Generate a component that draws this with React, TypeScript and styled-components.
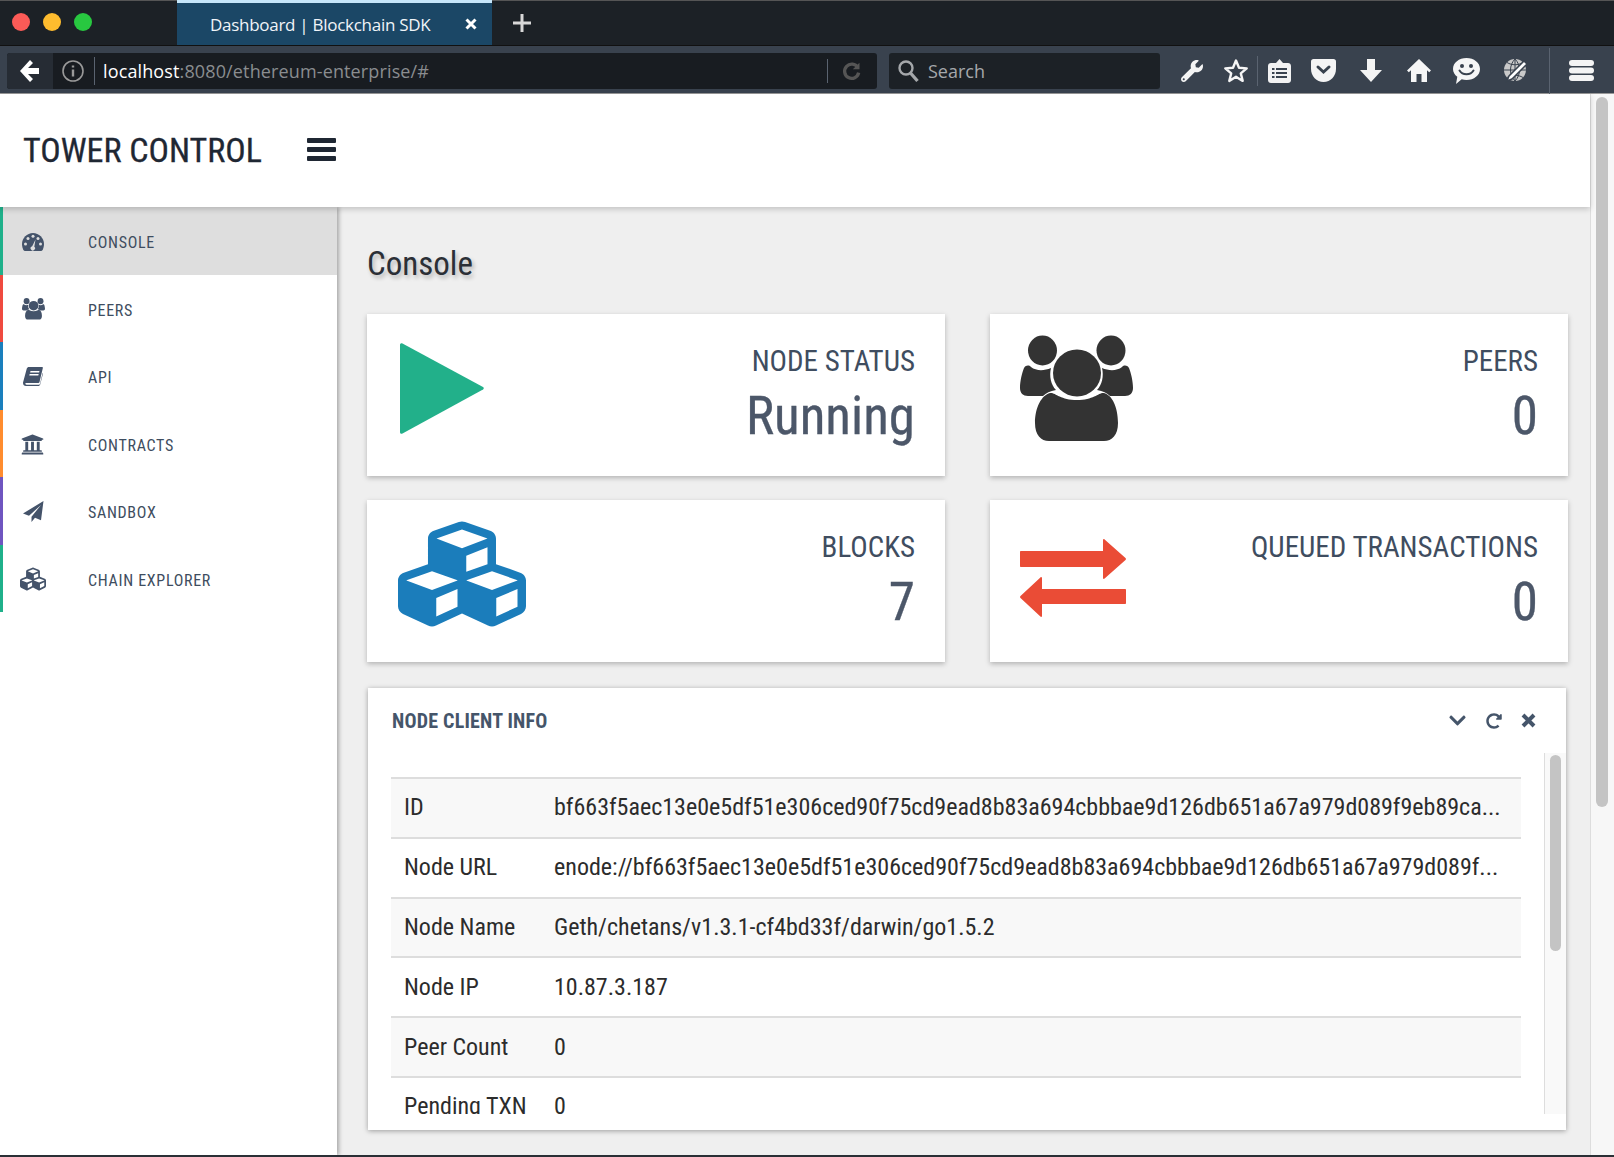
import React from "react";
import styled, { createGlobalStyle } from "styled-components";
import { FaChevronDown, FaCubes, FaRedoAlt, FaUniversity, FaWrench } from "react-icons/fa";

const GlobalStyle = createGlobalStyle`
  html, body {
    margin: 0;
    padding: 0;
    height: 1157px;
    overflow: hidden;
    background: #2a2f35;
  }
  * { box-sizing: border-box; }
`;

const CONDENSED = `"Roboto Condensed", Roboto, sans-serif`;

const Window = styled.div`
  width: 1614px;
  height: 1155px;
  display: flex;
  flex-direction: column;
  overflow: hidden;
  font-family: ${CONDENSED};
  font-stretch: condensed;
`;

const TabBar = styled.div`
  height: 46px;
  background: #1c2126;
  display: flex;
  align-items: stretch;
  border-bottom: 1px solid #111;
  border-top: 1px solid #555;
`;

const Lights = styled.div`
  width: 177px;
  padding: 12px 0 0 12px;
  display: flex;
  gap: 13px;
`;

const Light = styled.span<{ $c: string }>`
  width: 18px;
  height: 18px;
  border-radius: 50%;
  background: ${(p) => p.$c};
`;

const Tab = styled.div`
  width: 315px;
  background: #1b4766;
  border-top: 3px solid #c6e6fa;
  margin-top: -1px;
  display: flex;
  align-items: center;
  padding: 0 15px 0 33px;
  color: #f0f4f8;
  font: 17px "Open Sans", sans-serif;
  letter-spacing: -0.28px;
  justify-content: space-between;
`;

const NewTab = styled.span`
  display: flex;
  align-items: center;
  margin-left: 21px;
`;

const Toolbar = styled.div`
  height: 48px;
  background: #39424e;
  border-bottom: 1px solid #999;
  display: flex;
  align-items: center;
  padding: 2px 0 0 7px;
  color: #fff;
`;

const UrlBar = styled.div`
  width: 870px;
  height: 36px;
  background: #181c21;
  border-radius: 3px;
  display: flex;
  align-items: center;
  overflow: hidden;
`;

const BackButton = styled.div`
  width: 46px;
  height: 36px;
  background: #262c34;
  display: flex;
  align-items: center;
  justify-content: center;
`;

const Host = styled.span`
  color: #fff;
  font: 18px "Open Sans", sans-serif;
  letter-spacing: 0.13px;
`;

const UrlRest = styled.span`
  color: #8a8d90;
`;

const Sep = styled.span<{ $h: number; $m: string }>`
  width: 1px;
  height: ${(p) => p.$h}px;
  background: #5a6370;
  margin: ${(p) => p.$m};
  flex: none;
`;

const SearchBox = styled.div`
  width: 271px;
  height: 36px;
  margin-left: 12px;
  background: #1c2126;
  border-radius: 3px;
  display: flex;
  align-items: center;
  gap: 9px;
  padding-left: 8px;
  color: #a5a8ab;
  font: 18px "Open Sans", sans-serif;
`;

const ToolIcons = styled.div`
  flex: 1;
  display: flex;
  align-items: center;
  height: 100%;
  padding-left: 10px;
`;

const ToolSlot = styled.div<{ $w: number }>`
  width: ${(p) => p.$w}px;
  flex: none;
  display: flex;
  align-items: center;
  justify-content: center;
`;

const Page = styled.div`
  flex: 1;
  display: flex;
  min-height: 0;
  background: #efefef;
`;

const PageBody = styled.div`
  width: 1590px;
  display: flex;
  flex-direction: column;
`;

const Header = styled.header`
  height: 113px;
  background: #fff;
  display: flex;
  align-items: center;
  padding: 0 0 2px 23px;
  gap: 45px;
  position: relative;
  z-index: 2;
  box-shadow: 0 2px 6px rgba(0, 0, 0, 0.2);
`;

const Logo = styled.div`
  font-size: 34px;
  font-weight: 400;
  -webkit-text-stroke: 0.3px #1f2733;
  color: #1f2733;
  width: 239px;
  white-space: nowrap;
`;

const Burger = styled.div`
  width: 29px;
  height: 23px;
  display: flex;
  flex-direction: column;
  justify-content: space-between;
  & > i {
    display: block;
    height: 5px;
    border-radius: 1px;
    background: #1f2733;
  }
`;

const Columns = styled.div`
  flex: 1;
  display: flex;
  min-height: 0;
`;

const Sidebar = styled.nav`
  width: 337px;
  background: #fff;
  box-shadow: 2px 0 4px rgba(0, 0, 0, 0.3);
  position: relative;
  z-index: 1;
`;

const NavItem = styled.div<{ $bar: string; $active?: boolean }>`
  height: 67.5px;
  display: flex;
  align-items: center;
  border-left: 3px solid ${(p) => p.$bar};
  background: ${(p) => (p.$active ? "#dedede" : "#fff")};
  color: #3e4d60;
  font-size: 16px;
  letter-spacing: 0.7px;
`;

const NavIcon = styled.span<{ $x: number }>`
  width: 85px;
  height: 30px;
  padding: 2px 0 0 ${(p) => p.$x}px;
  display: flex;
  align-items: center;
  color: #44536a;
`;

const NavLabel = styled.span`
  padding-top: 4px;
`;

const Main = styled.main`
  flex: 1;
  padding: 37px 24px 0 30px;
  display: flex;
  flex-direction: column;
  min-width: 0;
`;

const Title = styled.h1`
  margin: 0 0 30px;
  font-size: 33px;
  line-height: 40px;
  font-weight: 400;
  color: #2b2f36;
  text-shadow: 2px 3px 4px rgba(0, 0, 0, 0.25);
`;

const Cards = styled.div`
  display: grid;
  grid-template-columns: 578px 578px;
  column-gap: 45px;
  row-gap: 24px;
`;

const Card = styled.div`
  height: 162px;
  background: #fff;
  box-shadow: 0 2px 5px rgba(0, 0, 0, 0.25);
  display: flex;
  justify-content: space-between;
  padding-right: 30px;
`;

const CardIcon = styled.div<{ $left: number; $top: number }>`
  padding: ${(p) => p.$top}px 0 0 ${(p) => p.$left}px;
`;

const BlocksIcon = styled(FaCubes)`
  display: block;
  width: 128px;
  height: 120px;
  color: #1b7dbb;
`;

const CardText = styled.div`
  text-align: right;
  display: flex;
  flex-direction: column;
  align-items: flex-end;
  padding-top: 29px;
`;

const CardLabel = styled.div`
  font-size: 29px;
  line-height: 36px;
  color: #3f4d60;
`;

const CardValue = styled.div`
  font-size: 53px;
  line-height: 64px;
  margin-top: 5px;
  color: #4c5769;
  -webkit-text-stroke: 0.3px #4c5769;
`;

const Panel = styled.section`
  margin: 26px 0 0 1px;
  height: 442px;
  background: #fff;
  box-shadow: 0 1px 5px rgba(0, 0, 0, 0.35);
  display: flex;
  flex-direction: column;
`;

const PanelHead = styled.div`
  height: 65px;
  display: flex;
  align-items: center;
  justify-content: space-between;
  padding: 0 30px 0 24px;
`;

const PanelTitle = styled.div`
  font-size: 20px;
  font-weight: 700;
  letter-spacing: 0.2px;
  color: #45556a;
`;

const PanelTools = styled.div`
  display: flex;
  align-items: center;
  gap: 19px;
  color: #45556a;
`;

const ScrollArea = styled.div`
  height: 361px;
  display: flex;
  background: #fff;
`;

const TableWrap = styled.div`
  flex: 1;
  overflow: hidden;
  padding: 24px 23px 0 23px;
  border-right: 1px solid #ddd;
`;

const Row = styled.div<{ $odd: boolean }>`
  height: 59.8px;
  display: flex;
  align-items: center;
  border-top: 2px solid #ddd;
  background: ${(p) => (p.$odd ? "#f8f8f8" : "#fff")};
  color: #2c2c2c;
  font-size: 24px;
  padding: 0 0 1px 13px;
  white-space: nowrap;
`;

const RowKey = styled.span`
  width: 150px;
  flex: none;
`;

const PanelTrack = styled.div`
  width: 21px;
  flex: none;
  background: #f9f9f9;
  padding: 2px 5px;
`;

const Thumb = styled.div<{ $h: number }>`
  height: ${(p) => p.$h}px;
  background: #c4c4c4;
  border-radius: 6px;
`;

const PageTrack = styled.div`
  width: 24px;
  background: #f7f7f7;
  border-left: 1px solid #ddd;
  padding: 3px 6px 0 5px;
`;

const Users = ({ width, color }: { width: number; color: string }) => (
  <svg width={width} height={(width * 106) / 113} viewBox="0 0 113 106" fill={color} style={{ display: "block" }}>
    <ellipse cx="22.5" cy="15.5" rx="14.5" ry="15" />
    <ellipse cx="91" cy="15.5" rx="14.5" ry="15" />
    <path d="M4 33C6 30 9 30 11 32C16 36 24 36 31 33C29 41 31 50 36 55C30 56 26 58 23 61H8C3 61 0 58 0 53C0 46 2 38 4 33z" />
    <path d="M109 33C107 30 104 30 102 32C97 36 89 36 82 33C84 41 82 50 77 55C83 56 87 58 90 61H105C110 61 113 58 113 53C113 46 111 38 109 33z" />
    <ellipse cx="57" cy="38" rx="24" ry="23.5" />
    <path d="M15 88C15 72 22 60 30 58C35 57 40 65 57 65C74 65 79 57 84 58C92 60 98 72 98 88C98 100 92 106 84 106H29C21 106 15 100 15 88z" />
  </svg>
);

const Gauge = () => (
  <svg width="22" height="18" viewBox="0 0 22 18">
    <path d="M11 0C5 0 0 5 0 11c0 2.600.7 4.800 1.800 6.500.3.300.6.500 1 .500h16.400c.4 0 .7-.2 1-.5C21.300 15.800 22 13.600 22 11 22 5 17 0 11 0z" fill="currentColor" />
    <g fill="#dedede">
      <circle cx="3.500" cy="11" r="1.500" />
      <circle cx="6" cy="5.500" r="1.500" />
      <circle cx="11" cy="3.300" r="1.500" />
      <circle cx="16" cy="5.500" r="1.500" />
      <circle cx="18.500" cy="11" r="1.500" />
      <path d="M13.500 6.500l-1.200 7.200a2.200 2.200 0 1 1-2.100-.5z" />
    </g>
  </svg>
);

const Book = () => (
  <svg width="20" height="19" viewBox="0 0 20 19" fill="currentColor">
    <path d="M6 0h13c.8 0 1 .6.800 1.300L16.500 15c-.2.800-.7 1-1.500 1H3.500c-1 0-1.300.6-1.100 1 .2.500.7.700 1.300.7H16c.5 0 .9-.3 1-.7l2.600-11 .4.500-2.800 11c-.2.900-1 1.500-2 1.500H3c-1.700 0-3-1.200-3-3 0-.6.100-1 .3-1.600L3.800 1.600C4 .7 5 0 6 0z" />
    <path d="M7.500 4h9l-.4 1.500h-9zM6.700 7h9l-.4 1.500h-9z" fill="#fff" />
  </svg>
);

const Plane = () => (
  <svg width="21" height="21" viewBox="0 0 21 21" fill="currentColor">
    <path d="M20.500 0L0 12.500l6 2.300L18 4 8.500 15.700v5.300l3.500-4.200 6 2.400z" />
  </svg>
);

const tools = [
  {
    w: 44,
    icon: <FaWrench size={22} color="#f4f4f4" />,
  },
  {
    w: 43,
    icon: (
      <svg width="26" height="25" viewBox="0 0 26 25" fill="none" stroke="#f6f6f6" strokeWidth="2.400">
        <path d="M13 2.500l3 7.300 7.700.6-5.900 5 1.900 7.500-6.700-4.100-6.700 4.100 1.900-7.500-5.900-5 7.700-.6z" strokeLinejoin="round" />
      </svg>
    ),
  },
];

const tools2 = [
  {
    w: 42,
    icon: (
      <svg width="23" height="24" viewBox="0 0 23 24">
        <path d="M3 4h5l3.500-4L15 4h5c1.700 0 3 1.300 3 3v14c0 1.700-1.300 3-3 3H3c-1.700 0-3-1.300-3-3V7c0-1.700 1.300-3 3-3z" fill="#f2f2f2" />
        <path d="M4 9h2.500v2H4zM8 9h11v2H8zM4 13h2.500v2H4zM8 13h11v2H8zM4 17h2.500v2H4zM8 17h11v2H8z" fill="#39424e" />
      </svg>
    ),
  },
  {
    w: 46,
    icon: (
      <svg width="25" height="23" viewBox="0 0 25 23">
        <path d="M2.500 0h20C24 0 25 1 25 2.500V10c0 7-5.500 13-12.500 13S0 17 0 10V2.500C0 1 1 0 2.500 0z" fill="#f4f4f4" />
        <path d="M7 8l5.500 5L18 8" fill="none" stroke="#39424e" strokeWidth="3" strokeLinecap="round" />
      </svg>
    ),
  },
  {
    w: 49,
    icon: (
      <svg width="22" height="23" viewBox="0 0 22 23" fill="#f4f4f4">
        <path d="M7 0h8v11h7L11 23 0 11h7z" />
      </svg>
    ),
  },
  {
    w: 47,
    icon: (
      <svg width="24" height="23" viewBox="0 0 24 23" fill="#f6f6f6">
        <path d="M12 0l12 11.500-1.800 1.800L20 11.200V23h-5.500v-8h-5v8H4V11.200l-2.200 2.100L0 11.500z" />
      </svg>
    ),
  },
  {
    w: 49,
    icon: (
      <svg width="27" height="26" viewBox="0 0 27 26">
        <path d="M13.500 0C21 0 27 4.700 27 11s-6 11-13.500 11c-1.700 0-3.300-.2-4.800-.7L3 26l1.300-7.200C1.600 16.800 0 14 0 11 0 4.700 6 0 13.500 0z" fill="#f6f6f6" />
        <circle cx="9" cy="8" r="2" fill="#39424e" />
        <circle cx="18" cy="8" r="2" fill="#39424e" />
        <path d="M6.500 12.500c3 5 11 5 14 0" fill="none" stroke="#39424e" strokeWidth="2" strokeLinecap="round" />
      </svg>
    ),
  },
  {
    w: 48,
    icon: (
      <svg width="25" height="25" viewBox="0 0 25 25">
        <circle cx="12" cy="12" r="11" fill="#c9c9c9" />
        <path d="M1 12h22M12 1v22M4 4.500c5 3 11 3 16 0M4 19.500c5-3 11-3 16 0M12 1c-6 6-6 16 0 22M12 1c6 6 6 16 0 22" fill="none" stroke="#39424e" strokeWidth="1" />
        <path d="M21 3l3 3L9 21l-5 2 2-5z" fill="#fff" stroke="#39424e" strokeWidth="1.500" />
      </svg>
    ),
  },
];

const nav = [
  { label: "CONSOLE", bar: "#1fb08a", x: 19, icon: <Gauge />, active: true },
  { label: "PEERS", bar: "#ef4a3f", x: 19, icon: <Users width={23} color="#44536a" /> },
  { label: "API", bar: "#1a7fbd", x: 20, icon: <Book /> },
  { label: "CONTRACTS", bar: "#ff8c2e", x: 18, icon: <FaUniversity size={23} /> },
  { label: "SANDBOX", bar: "#6f55c0", x: 20, icon: <Plane /> },
  { label: "CHAIN EXPLORER", bar: "#1fb08a", x: 17, icon: <FaCubes size={26} /> },
];

const rows = [
  ["ID", "bf663f5aec13e0e5df51e306ced90f75cd9ead8b83a694cbbbae9d126db651a67a979d089f9eb89ca..."],
  ["Node URL", "enode://bf663f5aec13e0e5df51e306ced90f75cd9ead8b83a694cbbbae9d126db651a67a979d089f..."],
  ["Node Name", "Geth/chetans/v1.3.1-cf4bd33f/darwin/go1.5.2"],
  ["Node IP", "10.87.3.187"],
  ["Peer Count", "0"],
  ["Pending TXN", "0"],
];

function App() {
  return (
    <>
      <GlobalStyle />
      <Window>
        <TabBar>
          <Lights>
            <Light $c="#fc5b57" />
            <Light $c="#febc2e" />
            <Light $c="#28c840" />
          </Lights>
          <Tab>
            <span>Dashboard | Blockchain SDK</span>
            <svg width="12" height="12" viewBox="0 0 12 12" stroke="#fff" strokeWidth="3">
              <path d="M1.500 1.500l9 9M10.500 1.500l-9 9" />
            </svg>
          </Tab>
          <NewTab>
            <svg width="18" height="18" viewBox="0 0 18 18" fill="#d8d8d8">
              <path d="M7.500 0h3v7.500H18v3h-7.500V18h-3v-7.500H0v-3h7.500z" />
            </svg>
          </NewTab>
        </TabBar>
        <Toolbar>
          <UrlBar>
            <BackButton>
              <svg width="20" height="22" viewBox="0 0 20 22" fill="#fff">
                <path d="M10 0l3 3-5 5h11v6H8l5 5-3 3L0 11z" />
              </svg>
            </BackButton>
            <svg width="24" height="24" viewBox="0 0 24 24" fill="none" stroke="#999" strokeWidth="1.600" style={{ marginLeft: 8 }}>
              <circle cx="12" cy="12" r="10" />
              <path d="M12 10.500v7M12 6.500v2" strokeWidth="2.400" />
            </svg>
            <Sep $h={28} $m="0 8px 0 9px" />
            <Host>
              localhost<UrlRest>:8080/ethereum-enterprise/#</UrlRest>
            </Host>
            <Sep $h={24} $m="0 14px 0 auto" />
            <svg width="20" height="22" viewBox="0 0 24 24" fill="none" stroke="#555" strokeWidth="4" style={{ marginRight: 15 }}>
              <path d="M19 8a8.500 8.500 0 1 0 1 6" />
              <path d="M21 2v8h-8" fill="#555" stroke="none" />
            </svg>
          </UrlBar>
          <SearchBox>
            <svg width="22" height="24" viewBox="0 0 22 24" fill="none" stroke="#a5a8ab" strokeWidth="2.400">
              <circle cx="9" cy="9" r="6.500" />
              <path d="M13.500 14l7 8" strokeWidth="3.400" />
            </svg>
            <span>Search</span>
          </SearchBox>
          <ToolIcons>
            {tools.map((t, i) => (
              <ToolSlot key={i} $w={t.w}>
                {t.icon}
              </ToolSlot>
            ))}
            <Sep $h={30} $m="0" />
            {tools2.map((t, i) => (
              <ToolSlot key={i} $w={t.w}>
                {t.icon}
              </ToolSlot>
            ))}
            <Sep $h={46} $m="0 0 0 10px" />
            <ToolSlot $w={62}>
              <svg width="25" height="21" viewBox="0 0 25 21" fill="#f4f4f4">
                <rect width="25" height="6" rx="3" />
                <rect y="7.500" width="25" height="6" rx="3" />
                <rect y="15" width="25" height="6" rx="3" />
              </svg>
            </ToolSlot>
          </ToolIcons>
        </Toolbar>
        <Page>
          <PageBody>
            <Header>
              <Logo>TOWER CONTROL</Logo>
              <Burger>
                <i />
                <i />
                <i />
              </Burger>
            </Header>
            <Columns>
              <Sidebar>
                {nav.map((n) => (
                  <NavItem key={n.label} $bar={n.bar} $active={n.active}>
                    <NavIcon $x={n.x}>{n.icon}</NavIcon>
                    <NavLabel>{n.label}</NavLabel>
                  </NavItem>
                ))}
              </Sidebar>
              <Main>
                <Title>Console</Title>
                <Cards>
                  <Card>
                    <CardIcon $left={33} $top={29}>
                      <svg width="84" height="91" viewBox="0 0 84 91" fill="#22b08a" style={{ display: "block" }}>
                        <path d="M0 2C0 .400 1 -.300 2.500 .500L83 44c1 .600 1 2 0 2.600L2.500 90.500C1 91.300 0 90.600 0 89z" />
                      </svg>
                    </CardIcon>
                    <CardText>
                      <CardLabel>NODE STATUS</CardLabel>
                      <CardValue>Running</CardValue>
                    </CardText>
                  </Card>
                  <Card>
                    <CardIcon $left={30} $top={21}>
                      <Users width={113} color="#333" />
                    </CardIcon>
                    <CardText>
                      <CardLabel>PEERS</CardLabel>
                      <CardValue>0</CardValue>
                    </CardText>
                  </Card>
                  <Card>
                    <CardIcon $left={31} $top={14}>
                      <BlocksIcon preserveAspectRatio="none" />
                    </CardIcon>
                    <CardText>
                      <CardLabel>BLOCKS</CardLabel>
                      <CardValue>7</CardValue>
                    </CardText>
                  </Card>
                  <Card>
                    <CardIcon $left={30} $top={39}>
                      <svg width="106" height="78" viewBox="0 0 106 78" fill="#ea4c36" style={{ display: "block" }}>
                        <path d="M1 12h82V1c0-1 1-1.300 1.600-.6L105.500 19c.6.600.6 1.500 0 2.100L84.600 39.600c-.6.700-1.600.4-1.600-.6V28H1c-.6 0-1-.4-1-1V13c0-.6.400-1 1-1z" />
                        <path d="M105 50H22V39c0-1-1-1.300-1.600-.6L.5 57c-.6.600-.6 1.500 0 2.100l19.900 18.500c.6.700 1.600.4 1.600-.6V65h83c.6 0 1-.4 1-1V51c0-.6-.4-1-1-1z" />
                      </svg>
                    </CardIcon>
                    <CardText>
                      <CardLabel>QUEUED TRANSACTIONS</CardLabel>
                      <CardValue>0</CardValue>
                    </CardText>
                  </Card>
                </Cards>
                <Panel>
                  <PanelHead>
                    <PanelTitle>NODE CLIENT INFO</PanelTitle>
                    <PanelTools>
                      <FaChevronDown size={19} />
                      <FaRedoAlt size={16} />
                      <svg width="15" height="15" viewBox="0 0 15 15" stroke="currentColor" strokeWidth="4">
                        <path d="M2 2l11 11M13 2L2 13" />
                      </svg>
                    </PanelTools>
                  </PanelHead>
                  <ScrollArea>
                    <TableWrap>
                      {rows.map(([k, v], i) => (
                        <Row key={k} $odd={i % 2 === 0}>
                          <RowKey>{k}</RowKey>
                          <span>{v}</span>
                        </Row>
                      ))}
                    </TableWrap>
                    <PanelTrack>
                      <Thumb $h={196} />
                    </PanelTrack>
                  </ScrollArea>
                </Panel>
              </Main>
            </Columns>
          </PageBody>
          <PageTrack>
            <Thumb $h={710} />
          </PageTrack>
        </Page>
      </Window>
    </>
  );
}

export default App;
